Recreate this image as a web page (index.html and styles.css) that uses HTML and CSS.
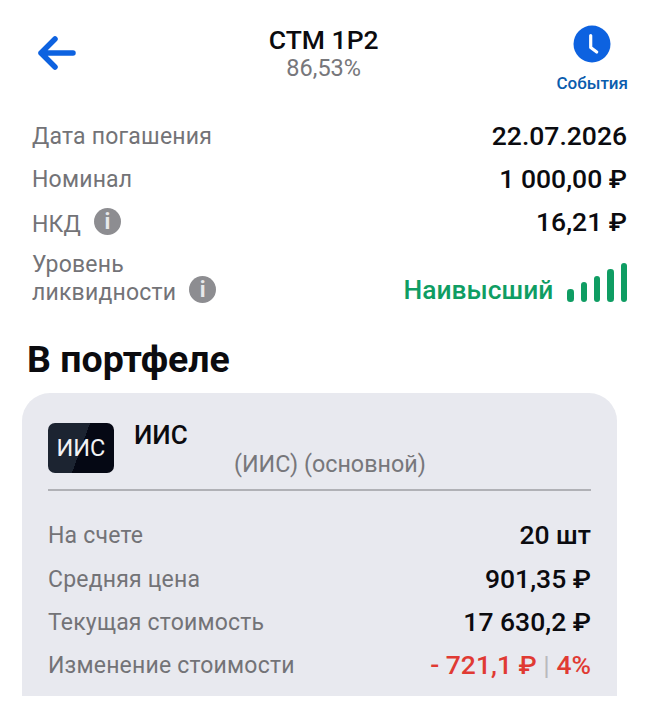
FILE: index.html
```html
<!DOCTYPE html>
<html lang="ru">
<head>
    <meta charset="UTF-8">
    <meta name="viewport" content="width=device-width, initial-scale=1.0">
    <title>СТМ 1P2</title>
    <link rel="stylesheet" href="styles.css">
</head>
<body>
    <header class="top">
        <button class="back" aria-label="Назад">
            <svg width="40" height="34" viewBox="0 0 40 34"><path d="M18 3 4 17l14 14M4 17h32" fill="none" stroke="#0d62e0" stroke-width="5.5" stroke-linecap="round" stroke-linejoin="round"/></svg>
        </button>
        <div class="title">
            <div class="name">СТМ 1P2</div>
            <div class="price">86,53%</div>
        </div>
        <div class="events">
            <svg width="38" height="38" viewBox="0 0 38 38"><circle cx="19" cy="19" r="18.5" fill="#0d62e0"/><path d="M17.7 10.5v12l6 4.5" fill="none" stroke="#fff" stroke-width="3.2" stroke-linecap="round" stroke-linejoin="round"/></svg>
            <span>События</span>
        </div>
    </header>

    <section class="info">
        <div class="row"><span class="label">Дата погашения</span><span class="value">22.07.2026</span></div>
        <div class="row"><span class="label">Номинал</span><span class="value">1 000,00 ₽</span></div>
        <div class="row"><span class="label label-nkd">НКД <i class="hint">i</i></span><span class="value">16,21 ₽</span></div>
        <div class="row row-liq">
            <span class="label">Уровень<br>ликвидности <i class="hint">i</i></span>
            <span class="liq">Наивысший
                <span class="bars"><b class="b1"></b><b class="b2"></b><b class="b3"></b><b class="b4"></b><b class="b5"></b></span>
            </span>
        </div>
    </section>

    <h1>В портфеле</h1>

    <section class="card">
        <div class="acc">
            <div class="logo">ИИС</div>
            <div class="acc-text">
                <div class="acc-name">ИИС</div>
                <div class="acc-sub">(ИИС) (основной)</div>
            </div>
        </div>
        <div class="row"><span class="label">На счете</span><span class="value">20 шт</span></div>
        <div class="row"><span class="label">Средняя цена</span><span class="value">901,35 ₽</span></div>
        <div class="row"><span class="label">Текущая стоимость</span><span class="value">17 630,2 ₽</span></div>
        <div class="row"><span class="label">Изменение стоимости</span><span class="value loss">- 721,1 ₽ <em>|</em> 4%</span></div>
    </section>
</body>
</html>
```

FILE: styles.css
```css
* {
    margin: 0;
    padding: 0;
    box-sizing: border-box;
}
body {
    background: #fff;
    font-family: Roboto, 'Noto Sans', sans-serif;
    height: 701px;
    overflow: hidden;
}
.top {
    display: flex;
    justify-content: space-between;
    padding: 25px 20px 0 37px;
    height: 115px;
}
.back {
    border: none;
    background: none;
    width: 40px;
    height: 34px;
    margin-top: 11px;
}
.title {
    text-align: center;
    margin-left: 14px;
}
.name {
    font-size: 26.5px;
    line-height: 30px;
    font-weight: 500;
    color: #0b0b0f;
}
.price {
    font-size: 23.5px;
    line-height: 26px;
    color: #77777b;
}
.events {
    display: flex;
    flex-direction: column;
    align-items: center;
    font-size: 17px;
    font-weight: 500;
    color: #0a5cad;
}
.events span {
    margin-top: 10px;
}
.info {
    padding: 0 21px 0 32px;
}
.row {
    display: flex;
    justify-content: space-between;
    align-items: center;
    height: 43px;
}
.label {
    font-size: 23px;
    color: #737377;
    letter-spacing: 0.2px;
}
.label-nkd {
    margin-top: 3px;
}
.value {
    font-size: 26.5px;
    font-weight: 500;
    color: #0b0b0f;
    margin-bottom: 2px;
}
.hint {
    display: inline-block;
    width: 27px;
    height: 27px;
    margin: -6px 0 -6px 7px;
    border-radius: 50%;
    background: #8d8d91;
    color: #e8e8ea;
    font-size: 22px;
    font-weight: 700;
    font-style: normal;
    line-height: 27px;
    text-align: center;
    vertical-align: 3px;
}
.row-liq {
    height: 64px;
    align-items: flex-end;
    line-height: 28px;
}
.row-liq .label {
    margin-bottom: 1px;
}
.liq {
    display: flex;
    align-items: flex-end;
    gap: 14px;
    margin-bottom: 4px;
    font-size: 26.4px;
    font-weight: 500;
    color: #0f9d63;
}
.bars {
    display: flex;
    align-items: flex-end;
    gap: 6.8px;
    margin-bottom: 2px;
}
.bars b {
    width: 6.5px;
    border-radius: 3.25px;
    background: #0f9d63;
}
.b1 { height: 13px; }
.b2 { height: 20px; }
.b3 { height: 26px; }
.b4 { height: 33px; }
.b5 { height: 39px; }
h1 {
    font-size: 37.5px;
    font-weight: 700;
    color: #0b0b0f;
    margin: 29px 0 0 27px;
    line-height: 44px;
}
.card {
    width: 595px;
    height: 303px;
    margin: 12px 0 0 22px;
    padding: 29px 26px 0;
    background: #e8e9ef;
    border-radius: 28px 28px 0 0;
}
.acc {
    display: flex;
    gap: 20px;
    height: 69px;
    border-bottom: 2px solid #b0b1b6;
    margin-bottom: 23px;
}
.logo {
    width: 66px;
    height: 50px;
    margin-top: 1px;
    border-radius: 7px;
    background: linear-gradient(110deg, #1c2431 0 50%, #050814 50%);
    color: #f2f2f4;
    font-size: 23.5px;
    line-height: 50px;
    text-align: center;
}
.acc-text {
    flex: 1;
}
.acc-name {
    font-size: 26px;
    font-weight: 500;
    color: #0b0b0f;
    line-height: 26px;
}
.acc-sub {
    font-size: 23.3px;
    color: #77777b;
    margin: 2px 0 0 100px;
}
.card .row {
    height: 43.4px;
}
.card .label {
    font-size: 23px;
}
.loss {
    color: #e03a33;
}
.loss em {
    font-style: normal;
    font-weight: 400;
    color: #b9b9bd;
}
```
